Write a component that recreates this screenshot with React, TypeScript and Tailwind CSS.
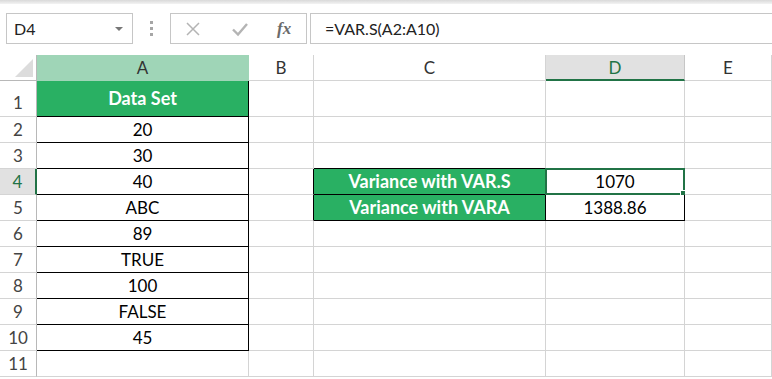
const font = { fontFamily: 'Lato, "Open Sans", sans-serif' }

const cols = [
  { key: 'A', w: 'w-[212px]' },
  { key: 'B', w: 'w-[65px]' },
  { key: 'C', w: 'w-[232px]' },
  { key: 'D', w: 'w-[139px]' },
  { key: 'E', w: 'w-[87px]' },
]

type Cell = { text?: string; green?: boolean; r?: boolean; b?: boolean; sel?: boolean }

const rows: { n: number; h: string; cells: Record<string, Cell> }[] = [
  { n: 1, h: 'h-[36px]', cells: { A: { text: 'Data Set', green: true, r: true, b: true } } },
  { n: 2, h: 'h-[26px]', cells: { A: { text: '20', r: true, b: true } } },
  { n: 3, h: 'h-[26px]', cells: { A: { text: '30', r: true, b: true }, C: { b: true }, D: { b: true } } },
  {
    n: 4,
    h: 'h-[26px]',
    cells: {
      A: { text: '40', r: true, b: true },
      B: { r: true },
      C: { text: 'Variance with VAR.S', green: true, r: true, b: true },
      D: { text: '1070', r: true, b: true, sel: true },
    },
  },
  {
    n: 5,
    h: 'h-[26px]',
    cells: {
      A: { text: 'ABC', r: true, b: true },
      B: { r: true },
      C: { text: 'Variance with VARA', green: true, r: true, b: true },
      D: { text: '1388.86', r: true, b: true },
    },
  },
  { n: 6, h: 'h-[26px]', cells: { A: { text: '89', r: true, b: true } } },
  { n: 7, h: 'h-[26px]', cells: { A: { text: 'TRUE', r: true, b: true } } },
  { n: 8, h: 'h-[26px]', cells: { A: { text: '100', r: true, b: true } } },
  { n: 9, h: 'h-[26px]', cells: { A: { text: 'FALSE', r: true, b: true } } },
  { n: 10, h: 'h-[26px]', cells: { A: { text: '45', r: true, b: true } } },
  { n: 11, h: 'h-[26px]', cells: {} },
]

function Toolbar() {
  return (
    <div className="h-[55px] bg-white relative">
      <div className="h-[4px] bg-gradient-to-b from-[#d9d9d9] to-[#f3f3f3]" />
      <div className="flex items-start pt-[9px]">
        <div className="ml-[6px] w-[127px] h-[31px] border border-[#c6c6c6] flex items-center pl-[7px] pr-[9px] text-[16px] text-[#222]">
          <span className="flex-1">D4</span>
          <span className="w-0 h-0 border-l-[4px] border-r-[4px] border-t-[4px] border-l-transparent border-r-transparent border-t-[#777]" />
        </div>
        <div className="w-[37px] h-[31px] flex flex-col items-center justify-center gap-[3px]">
          <span className="w-[3px] h-[3px] bg-[#a6a6a6]" />
          <span className="w-[3px] h-[3px] bg-[#a6a6a6]" />
          <span className="w-[3px] h-[3px] bg-[#a6a6a6]" />
        </div>
        <div className="w-[137px] h-[31px] border border-[#c6c6c6] flex items-center">
          <svg width="16" height="16" viewBox="0 0 16 16" className="ml-[14px]">
            <path d="M2 2 L14 14 M14 2 L2 14" stroke="#b4b4b4" strokeWidth="1.5" fill="none" />
          </svg>
          <svg width="18" height="16" viewBox="0 0 18 16" className="ml-[30px]">
            <path d="M2 8.5 L7 13.5 L16 3" stroke="#b4b4b4" strokeWidth="2.4" fill="none" />
          </svg>
          <span
            className="ml-[28px] text-[17px] italic font-bold text-[#6b6b6b] leading-none"
            style={{ fontFamily: '"Liberation Serif", "DejaVu Serif", serif' }}
          >
            fx
          </span>
        </div>
        <div className="ml-[3px] flex-1 h-[31px] border border-r-0 border-[#c6c6c6] flex items-center pl-[14px] text-[16px] text-[#222]">
          =VAR.S(A2:A10)
        </div>
      </div>
    </div>
  )
}

function Header() {
  return (
    <div className="flex h-[26px]">
      <div className="w-[37px] shrink-0 border-r border-b border-[#b8b8b8] bg-white flex items-end justify-end pr-[3px] pb-[3px]">
        <div className="w-0 h-0 border-l-[18px] border-t-[18px] border-l-transparent border-t-transparent border-b-0 border-r-0 relative">
          <span className="absolute -left-[18px] -top-[18px] w-0 h-0 border-l-[18px] border-b-[18px] border-l-transparent border-b-[#dcdcdc]" />
        </div>
      </div>
      {cols.map((c) => {
        const base = `${c.w} shrink-0 flex items-center justify-center text-[17px]`
        if (c.key === 'A')
          return (
            <div key={c.key} className={`${base} bg-[#9fd5b7] text-[#333] border-r border-b border-[#9fd5b7]`}>
              {c.key}
            </div>
          )
        if (c.key === 'D')
          return (
            <div key={c.key} className={`${base} bg-[#e1e1e1] text-[#217346] border-r border-[#c6c6c6] border-b-2 border-b-[#217346] pt-[1px]`}>
              {c.key}
            </div>
          )
        return (
          <div key={c.key} className={`${base} bg-white text-[#333] border-r border-b border-[#d4d4d4]`}>
            {c.key}
          </div>
        )
      })}
      <div className="flex-1 border-b border-[#d4d4d4]" />
    </div>
  )
}

function Row({ row }: { row: (typeof rows)[number] }) {
  const active = row.n === 4
  return (
    <div className={`flex ${row.h}`}>
      <div
        className={`w-[37px] shrink-0 flex items-center justify-center text-[17px] border-b border-[#d4d4d4] ${
          active ? 'bg-[#e1e1e1] text-[#217346] border-r-2 border-r-[#217346]' : 'bg-white text-[#444] border-r border-r-[#b8b8b8]'
        } ${row.n === 1 ? 'pt-[8px]' : ''}`}
      >
        {row.n}
      </div>
      {cols.map((c) => {
        const cell = row.cells[c.key] || {}
        return (
          <div
            key={c.key}
            className={`${c.w} shrink-0 relative flex items-center justify-center border-r border-b ${
              cell.r ? 'border-r-black' : 'border-r-[#d4d4d4]'
            } ${cell.b ? 'border-b-black' : 'border-b-[#d4d4d4]'} ${
              cell.green ? 'bg-[#29b063] text-white font-bold text-[18px]' : 'bg-white text-black text-[17px]'
            }`}
          >
            {cell.text}
            {cell.sel && (
              <>
                <span className="absolute -left-px -top-px -right-px -bottom-px border-2 border-[#217346]" />
                <span className="absolute -right-[4px] -bottom-[4px] w-[6px] h-[6px] bg-[#217346] border border-white box-content" />
              </>
            )}
          </div>
        )
      })}
      <div className="flex-1 border-b border-[#d4d4d4]" />
    </div>
  )
}

export default function App() {
  return (
    <div className="w-[772px] h-[379px] overflow-hidden bg-white" style={font}>
      <Toolbar />
      <Header />
      {rows.map((r) => (
        <Row key={r.n} row={r} />
      ))}
    </div>
  )
}
